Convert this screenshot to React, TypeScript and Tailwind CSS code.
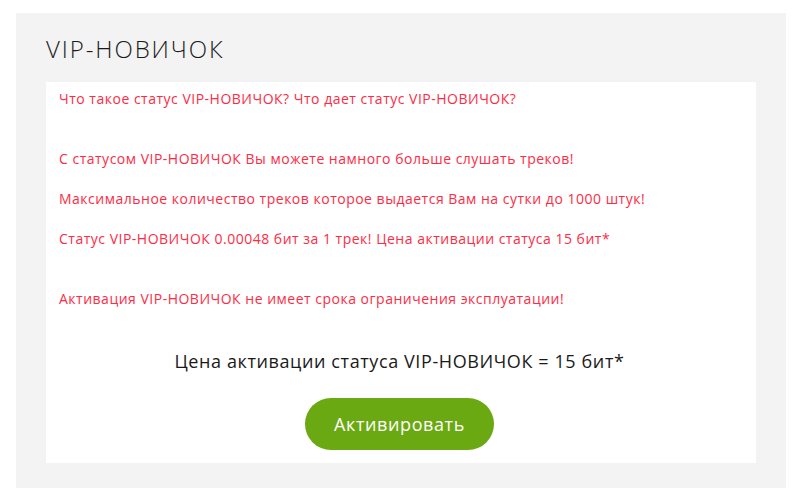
import React from 'react';

const font = { fontFamily: '"Open Sans", "Noto Sans", sans-serif' };

export default function App() {
  return (
    <div className="min-h-screen bg-white pt-[13px] pl-4" style={font}>
      <div className="w-[770px] h-[475px] bg-[#f3f3f3] px-[30px] pt-[18px]">
        <h1 className="text-[24px] leading-[36px] font-light text-[#1a1a1a] tracking-[1.9px]">VIP-НОВИЧОК</h1>
        <div className="mt-[15px] bg-white h-[381px] pl-[13px] pr-4 pt-[7px]">
          <div className="text-[14px] leading-[20px] text-[#fe2b46] tracking-[0.5px]">
            <p>Что такое статус VIP-НОВИЧОК? Что дает статус VIP-НОВИЧОК?</p>
            <p className="mt-[40px]">С статусом VIP-НОВИЧОК Вы можете намного больше слушать треков!</p>
            <p className="mt-[20px]">Максимальное количество треков которое выдается Вам на сутки до 1000 штук!</p>
            <p className="mt-[20px]">Статус VIP-НОВИЧОК 0.00048 бит за 1 трек! Цена активации статуса 15 бит*</p>
            <p className="mt-[40px]">Активация VIP-НОВИЧОК не имеет срока ограничения эксплуатации!</p>
          </div>
          <p className="mt-[40px] text-center text-[18px] leading-[24px] text-[#1a1a1a] tracking-[0.6px]">
            Цена активации статуса VIP-НОВИЧОК = 15 бит*
          </p>
          <div className="mt-[25px] flex justify-center">
            <button className="w-[189px] h-[52px] rounded-full bg-[#6aa912] text-white text-[18px] font-medium tracking-[0.6px]">
              Активировать
            </button>
          </div>
        </div>
      </div>
    </div>
  );
}
